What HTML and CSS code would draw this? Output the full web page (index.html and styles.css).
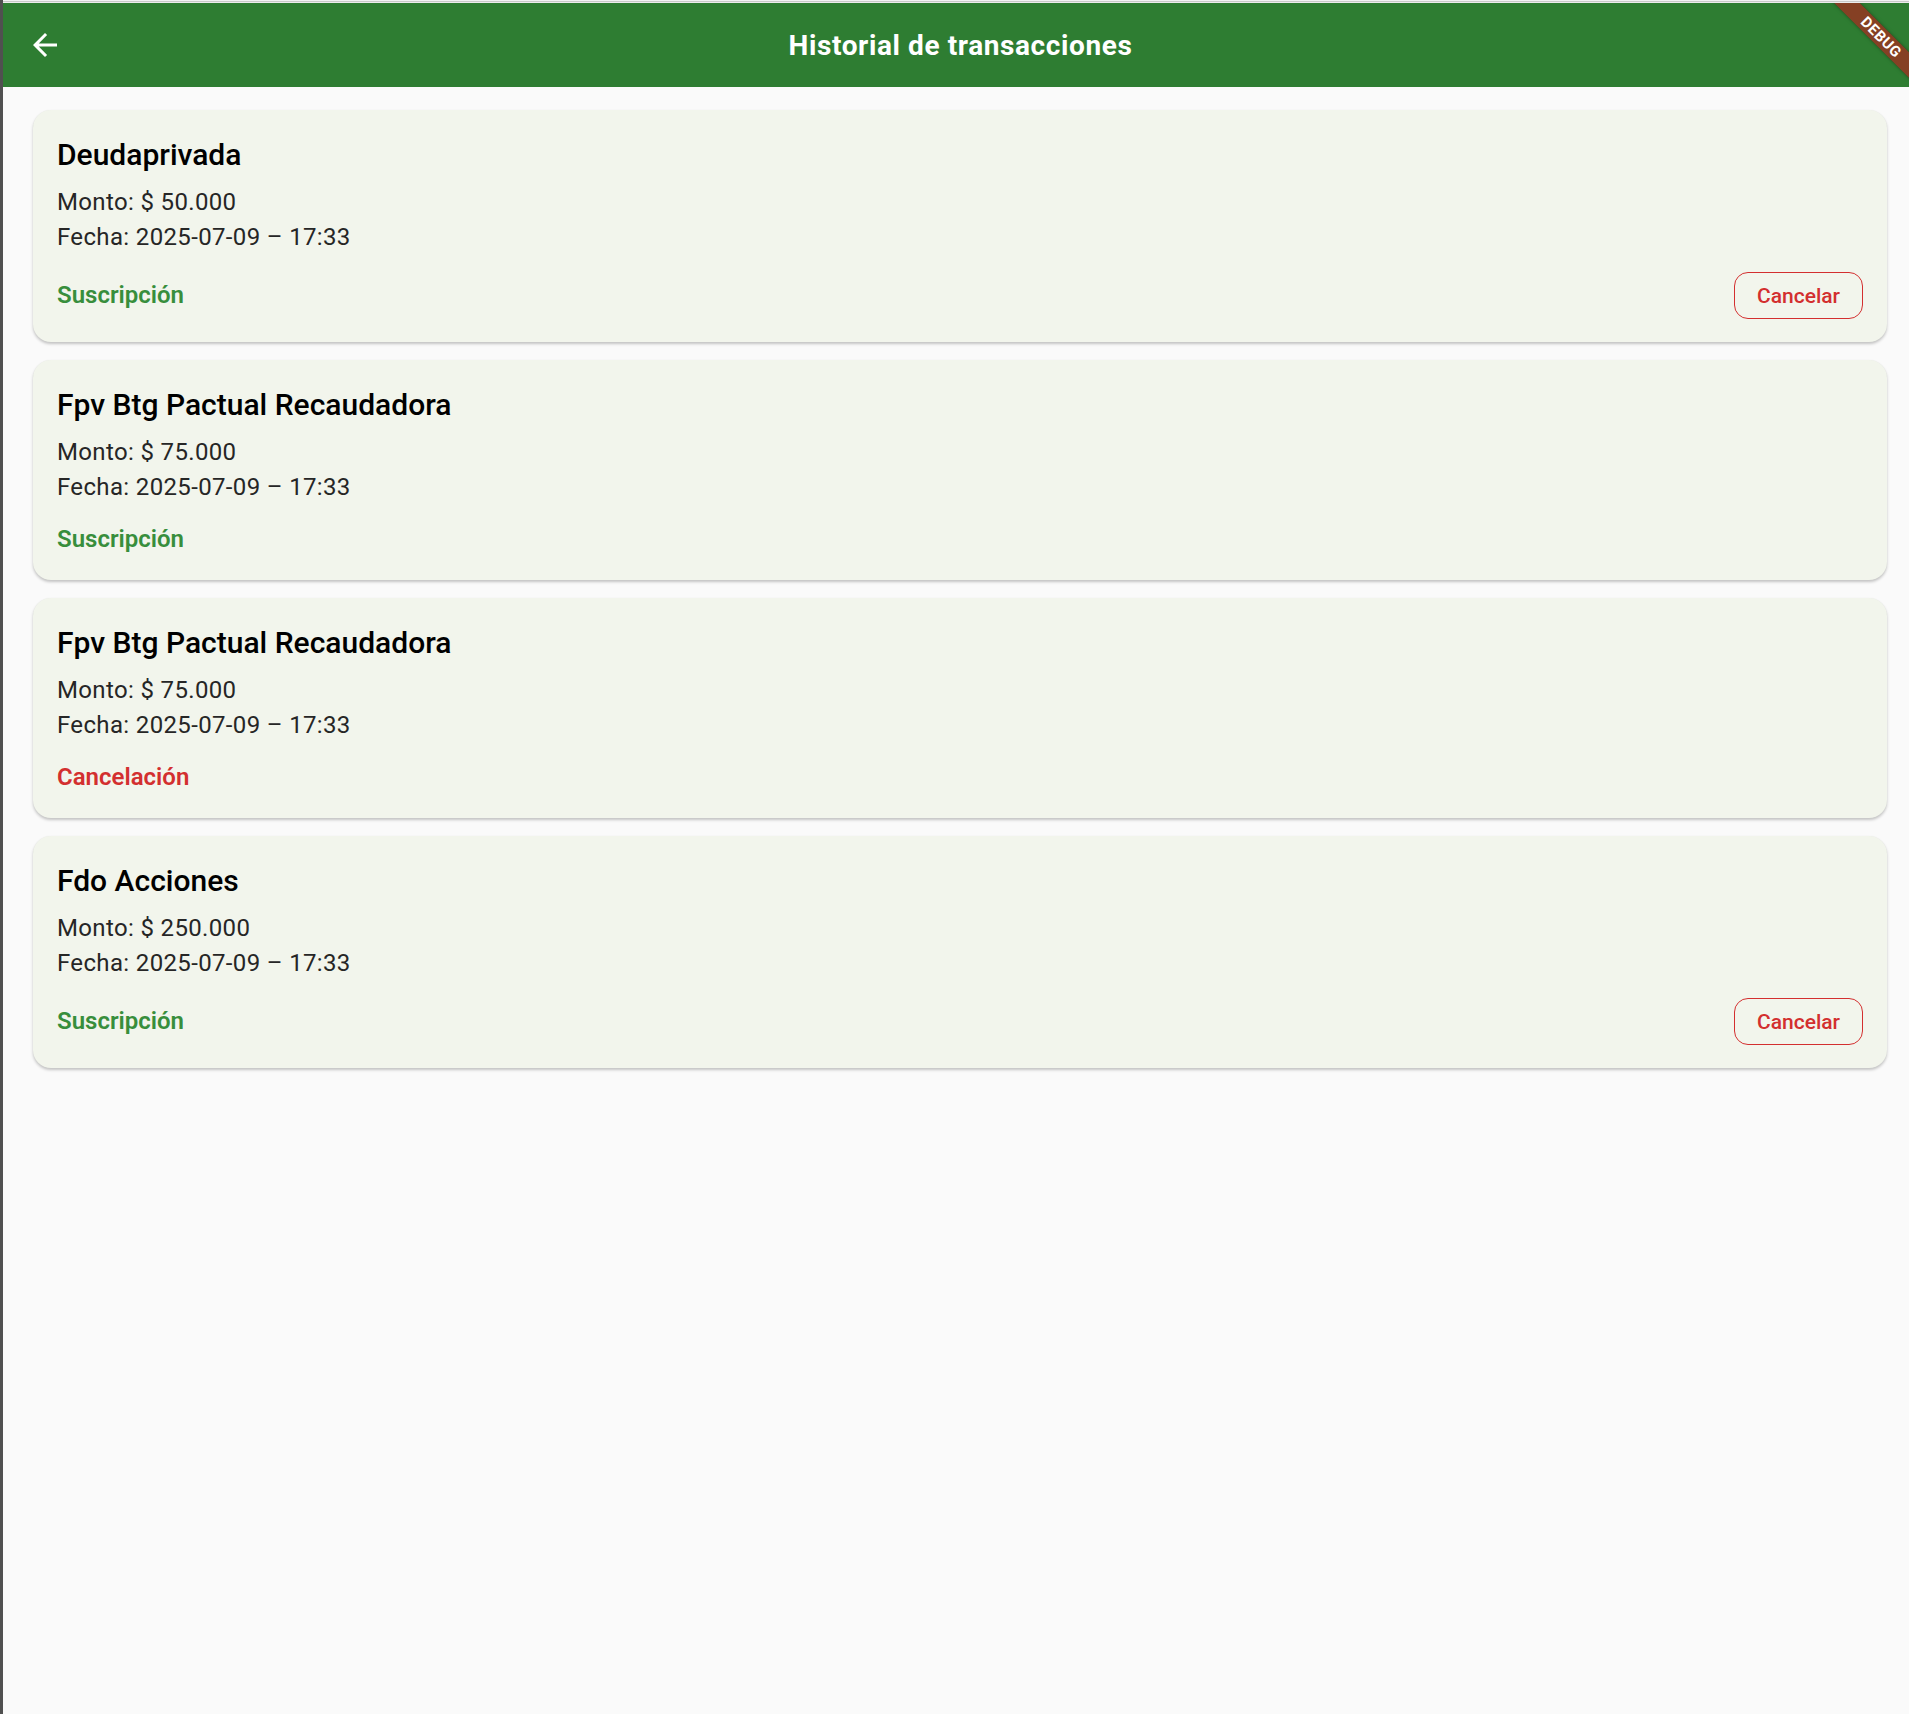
FILE: index.html
```html
<!DOCTYPE html>
<html lang="es">
<head>
<meta charset="utf-8">
<title>Historial de transacciones</title>
<link rel="stylesheet" href="styles.css">
</head>
<body>
<div class="window">
  <div class="topline"></div>
  <div class="app">
    <header class="appbar">
      <button class="back" aria-label="Atrás">
        <svg width="36" height="36" viewBox="0 0 24 24"><path d="M20 11H7.83l5.59-5.59L12 4l-8 8 8 8 1.41-1.41L7.83 13H20v-2z" fill="#ffffff"/></svg>
      </button>
      <h1 class="title">Historial de transacciones</h1>
      <div class="spacer"></div>
    </header>
    <main class="list">
      <section class="card">
        <h2 class="card-title">Deudaprivada</h2>
        <p class="line">Monto: $ 50.000</p>
        <p class="line">Fecha: 2025-07-09 – 17:33</p>
        <div class="status-row">
          <span class="status sub">Suscripción</span>
          <button class="cancel">Cancelar</button>
        </div>
      </section>
      <section class="card">
        <h2 class="card-title">Fpv Btg Pactual Recaudadora</h2>
        <p class="line">Monto: $ 75.000</p>
        <p class="line">Fecha: 2025-07-09 – 17:33</p>
        <div class="status-row">
          <span class="status sub">Suscripción</span>
        </div>
      </section>
      <section class="card">
        <h2 class="card-title">Fpv Btg Pactual Recaudadora</h2>
        <p class="line">Monto: $ 75.000</p>
        <p class="line">Fecha: 2025-07-09 – 17:33</p>
        <div class="status-row">
          <span class="status can">Cancelación</span>
        </div>
      </section>
      <section class="card">
        <h2 class="card-title">Fdo Acciones</h2>
        <p class="line">Monto: $ 250.000</p>
        <p class="line">Fecha: 2025-07-09 – 17:33</p>
        <div class="status-row">
          <span class="status sub">Suscripción</span>
          <button class="cancel">Cancelar</button>
        </div>
      </section>
    </main>
    <div class="debug-banner">DEBUG</div>
  </div>
</div>
</body>
</html>
```
FILE: styles.css
```css
html, body {
  margin: 0;
  padding: 0;
}
body {
  background: #fafafa;
  font-family: Roboto, "Liberation Sans", sans-serif;
}
.window {
  display: flex;
  flex-direction: column;
  min-height: 1714px;
  border-left: 3px solid #505050;
  box-sizing: border-box;
}
.topline {
  height: 3px;
  background: linear-gradient(#f2f2f2 0 1px, #c9c9c9 1px 2px, #ececec 2px 3px);
}
.app {
  position: relative;
  flex: 1;
  background: #fafafa;
  overflow: hidden;
}
.appbar {
  height: 84px;
  background: #2e7d32;
  display: grid;
  grid-template-columns: 84px 1fr 84px;
  align-items: center;
}
.back {
  width: 84px;
  height: 84px;
  border: 0;
  padding: 0 0 0 24px;
  background: transparent;
  display: flex;
  align-items: center;
}
.back svg {
  display: block;
}
.title {
  margin: 0;
  padding: 2px 0 0 9px;
  text-align: center;
  color: #ffffff;
  font-size: 28px;
  font-weight: 700;
  letter-spacing: 0.6px;
  line-height: 32px;
}
.list {
  display: flex;
  flex-direction: column;
  gap: 18px;
  padding: 23px 22px 0 30px;
}
.card {
  background: #f2f5ec;
  border-radius: 18px;
  padding: 24px 24px 23px 24px;
  box-shadow: 0 2px 3px rgba(0, 0, 0, 0.22), 0 0 1px rgba(0, 0, 0, 0.06);
}
.card-title {
  margin: 0 0 10px;
  font-size: 30px;
  font-weight: 500;
  line-height: 41px;
  color: #000000;
}
.line {
  margin: 0;
  font-size: 24px;
  line-height: 35px;
  color: #262626;
  letter-spacing: 0.35px;
}
.status-row {
  margin-top: 17px;
  display: flex;
  align-items: center;
  justify-content: space-between;
  min-height: 35px;
}
.status {
  font-size: 24px;
  font-weight: 600;
  line-height: 35px;
}
.status.sub {
  color: #388e3c;
}
.status.can {
  color: #d32f2f;
}
.cancel {
  height: 47px;
  width: 129px;
  box-sizing: border-box;
  border: 1.5px solid #d32f2f;
  border-radius: 14px;
  background: transparent;
  color: #d32f2f;
  font-family: Roboto, "Liberation Sans", sans-serif;
  font-size: 21px;
  font-weight: 500;
  padding: 0;
}
.debug-banner {
  position: absolute;
  top: 23px;
  right: -70px;
  width: 200px;
  height: 18px;
  box-sizing: border-box;
  padding-left: 6px;
  background: rgba(183, 28, 28, 0.63);
  color: #ffffff;
  font-size: 15px;
  font-weight: 700;
  line-height: 18px;
  text-align: center;
  letter-spacing: 0.5px;
  transform: rotate(45deg);
  box-shadow: 0 0 4px rgba(0, 0, 0, 0.35);
}
```
